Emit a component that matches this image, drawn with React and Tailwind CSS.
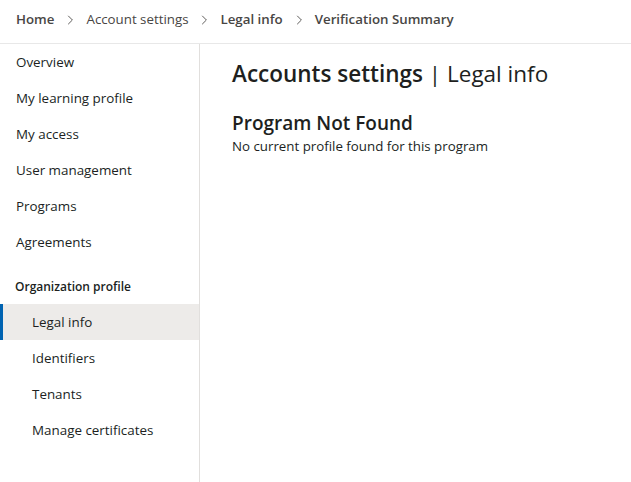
const NAV = ['Overview', 'My learning profile', 'My access', 'User management', 'Programs', 'Agreements'];
const ORG = ['Legal info', 'Identifiers', 'Tenants', 'Manage certificates'];

const Chevron = () => (
  <svg width="12" height="12" viewBox="0 0 12 12" className="mx-[10px] text-[#605e5c]">
    <path d="M4.2 1.8 8.4 6l-4.2 4.2" fill="none" stroke="currentColor" strokeWidth="1" />
  </svg>
);

export default function App() {
  return (
    <div className="w-[631px] h-[482px] bg-white text-[#201f1e] flex flex-col overflow-hidden" style={{ fontFamily: '"Segoe UI", "Open Sans", sans-serif' }}>
      <div className="h-[44px] shrink-0 flex items-center px-4 pb-[4px] border-b border-[#e8e8e8] text-[13.3px]">
        <span className="font-semibold text-[#484644]">Home</span>
        <Chevron />
        <span className="text-[#484644]">Account settings</span>
        <Chevron />
        <span className="font-semibold text-[#484644]">Legal info</span>
        <Chevron />
        <span className="font-semibold text-[#484644]">Verification Summary</span>
      </div>
      <div className="flex flex-1">
        <nav className="w-[200px] shrink-0 border-r border-[#e1dfdd] text-[13.4px]">
          {NAV.map(n => (
            <div key={n} className="h-[36px] flex items-center pl-4">{n}</div>
          ))}
          <div className="h-[44px] flex items-center pl-[15px] pt-[9px] text-[12px] font-semibold">Organization profile</div>
          {ORG.map((n, i) => (
            <div key={n} className={i === 0 ? 'h-[36px] flex items-center bg-[#edebe9] border-l-[3px] border-[#0063b1] pl-[29px]' : 'h-[36px] flex items-center pl-8'}>{n}</div>
          ))}
        </nav>
        <main className="flex-1 pl-8 pt-[14px]">
          <h1 className="text-[22.5px] leading-[32px]"><span className="font-semibold">Accounts settings</span> | Legal info</h1>
          <h2 className="text-[19px] font-semibold leading-[26px] mt-[20px]">Program Not Found</h2>
          <p className="text-[13.3px] leading-[20px]">No current profile found for this program</p>
        </main>
      </div>
    </div>
  );
}
